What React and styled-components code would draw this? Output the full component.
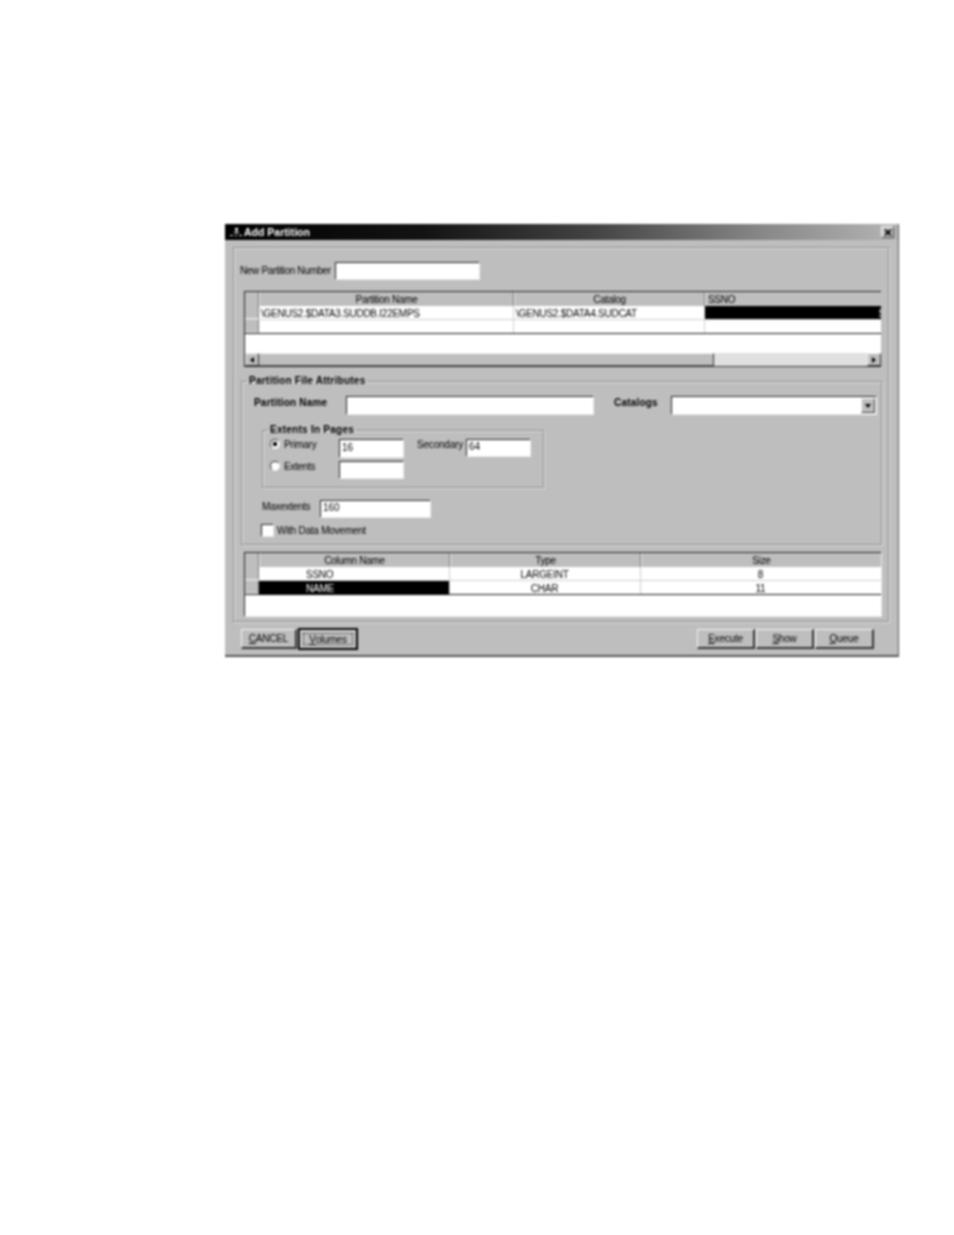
import React from "react";
import styled, { createGlobalStyle } from "styled-components";

const partitionColumns = "14px 255px 191px 177px";
const columnColumns = "14px 191px 191px 241px";

const App = () => {
  return (
    <>
      <GlobalStyle />
      <Page>
        <Window>
          <TitleBar>
            <AppIcon viewBox="0 0 14 10">
              <path d="M6 1h3v2H8v2h2v1H5V5h2V3H6z" fill="#fff" />
              <path d="M1 8h3v1H1zM6 8h2v1H6zM10 8h3v1h-3z" fill="#eee" />
            </AppIcon>
            <TitleText>Add Partition</TitleText>
            <CloseButton>
              <svg width="8" height="7" viewBox="0 0 8 7">
                <path d="M1 0.5l6 6M7 0.5l-6 6" stroke="#000" strokeWidth="1.8" />
              </svg>
            </CloseButton>
          </TitleBar>

          <Panel>
            <NumberRow>
              <NumberLabel>New Partition Number</NumberLabel>
              <Field $width={144} readOnly />
            </NumberRow>

            <DataGrid $height={76}>
              <GridRow $columns={partitionColumns} $header>
                <RowHandle />
                <HeaderCell>Partition Name</HeaderCell>
                <HeaderCell>Catalog</HeaderCell>
                <HeaderCell $left>SSNO</HeaderCell>
              </GridRow>
              <GridRow $columns={partitionColumns}>
                <RowHandle />
                <Cell $align="left">\GENUS2.$DATA3.SUDDB.I22EMPS</Cell>
                <Cell $align="left">\GENUS2.$DATA4.SUDCAT</Cell>
                <Cell $selected $align="right">
                  <ClippedGlyph>S</ClippedGlyph>
                </Cell>
              </GridRow>
              <GridRow $columns={partitionColumns} $last>
                <RowHandle />
                <Cell />
                <Cell />
                <Cell />
              </GridRow>
              <GridBlank />
              <ScrollBar>
                <ScrollButton>
                  <ArrowLeft />
                </ScrollButton>
                <ScrollThumb />
                <ScrollTrack />
                <ScrollButton>
                  <ArrowRight />
                </ScrollButton>
              </ScrollBar>
            </DataGrid>

            <AttributesGroup>
              <GroupTitle $inset={-7}>Partition File Attributes</GroupTitle>
              <NameRow>
                <NameLabel $width={92}>Partition Name</NameLabel>
                <Field $width={247} $height={18} readOnly />
                <NameLabel $width={57} $gap={21}>
                  Catalogs
                </NameLabel>
                <SelectBox>
                  <SelectButton>
                    <ArrowDown />
                  </SelectButton>
                </SelectBox>
              </NameRow>

              <ExtentsGroup>
                <GroupTitle $inset={-2}>Extents In Pages</GroupTitle>
                <ExtentsGrid>
                  <RadioLabel>
                    <Radio $checked />
                    Primary
                  </RadioLabel>
                  <Field $width={64} $height={18} value="16" readOnly />
                  <SecondaryLabel>Secondary</SecondaryLabel>
                  <Field $width={64} $height={17} value="64" readOnly />
                  <RadioLabel>
                    <Radio />
                    Extents
                  </RadioLabel>
                  <Field $width={64} $height={17} readOnly />
                </ExtentsGrid>
              </ExtentsGroup>

              <MaxRow>
                <MaxLabel>Maxextents</MaxLabel>
                <Field $width={110} value="160" readOnly />
              </MaxRow>
              <CheckRow>
                <CheckBox />
                <PlainLabel>With Data Movement</PlainLabel>
              </CheckRow>
            </AttributesGroup>

            <ColumnsGrid $height={64}>
              <GridRow $columns={columnColumns} $header>
                <RowHandle />
                <HeaderCell>Column Name</HeaderCell>
                <HeaderCell>Type</HeaderCell>
                <HeaderCell>Size</HeaderCell>
              </GridRow>
              <GridRow $columns={columnColumns}>
                <RowHandle />
                <Cell $indent={47}>SSNO</Cell>
                <Cell>LARGEINT</Cell>
                <Cell>8</Cell>
              </GridRow>
              <GridRow $columns={columnColumns} $last>
                <RowHandle />
                <Cell $selected $indent={47}>
                  NAME
                </Cell>
                <Cell>CHAR</Cell>
                <Cell>11</Cell>
              </GridRow>
              <GridBlank />
            </ColumnsGrid>
          </Panel>

          <ButtonBar>
            <ButtonGroup>
              <DialogButton $width={56}>
                <u>C</u>ANCEL
              </DialogButton>
              <DefaultButton>
                <FocusFrame>
                  <u>V</u>olumes
                </FocusFrame>
              </DefaultButton>
            </ButtonGroup>
            <ButtonGroup>
              <DialogButton $width={58}>
                <u>E</u>xecute
              </DialogButton>
              <DialogButton $width={58}>
                <u>S</u>how
              </DialogButton>
              <DialogButton $width={59}>
                <u>Q</u>ueue
              </DialogButton>
            </ButtonGroup>
          </ButtonBar>
        </Window>
      </Page>
    </>
  );
};

export default App;

const GlobalStyle = createGlobalStyle`
  html, body {
    margin: 0;
    padding: 0;
    background: #fff;
  }

  * {
    box-sizing: border-box;
  }
`;

const Page = styled.div`
  height: 1235px;
  padding: 224px 0 0 225px;
  background: #fff;
  font-family: "Liberation Sans", Arial, sans-serif;
  font-size: 10px;
  color: #000;
`;

const Window = styled.div`
  width: 674px;
  height: 433px;
  display: flex;
  flex-direction: column;
  background: #bebebe;
  border-right: 1px solid #555;
  border-bottom: 2px solid #555;
  filter: blur(0.8px);
`;

const TitleBar = styled.div`
  height: 16px;
  flex: none;
  display: flex;
  align-items: center;
  padding: 0 4px 0 4px;
  background: linear-gradient(90deg, #000 0%, #141414 30%, #444 55%, #888 80%, #b4b4b4 100%);
`;

const AppIcon = styled.svg`
  width: 14px;
  height: 10px;
  margin-right: 1px;
`;

const TitleText = styled.span`
  flex: 1;
  font-size: 10.5px;
  font-weight: 700;
  color: #fff;
`;

const CloseButton = styled.div`
  width: 13px;
  height: 12px;
  display: flex;
  align-items: center;
  justify-content: center;
  background: #c8c8c8;
  border-right: 1px solid #444;
  border-bottom: 1px solid #444;
  border-top: 1px solid #f4f4f4;
  border-left: 1px solid #f4f4f4;
`;

const Panel = styled.div`
  width: 656px;
  height: 375px;
  flex: none;
  margin: 7px 0 0 8px;
  padding: 14px 0 0 6px;
  border: 1px solid #8c8c8c;
  box-shadow: inset 1px 1px #e2e2e2, 1px 1px #e2e2e2;
`;

const NumberRow = styled.div`
  display: flex;
  align-items: center;
  height: 17px;
`;

const PlainLabel = styled.span`
  letter-spacing: -0.25px;
  white-space: nowrap;
`;

const NumberLabel = styled(PlainLabel)`
  width: 95px;
  flex: none;
  letter-spacing: -0.35px;
`;

const Field = styled.input`
  flex: none;
  width: ${({ $width }) => $width}px;
  height: ${({ $height }) => $height || 17}px;
  padding: 0 0 3px 2px;
  border: 0;
  border-top: 1px solid #222;
  border-left: 1px solid #222;
  border-radius: 0;
  outline: none;
  background: #fff;
  box-shadow: 1px 1px #ececec;
  font-family: "Liberation Sans", Arial, sans-serif;
  font-size: 10px;
  color: #000;
`;

const DataGrid = styled.div`
  width: 637px;
  height: ${({ $height }) => $height}px;
  margin: 12px 0 0 4px;
  display: flex;
  flex-direction: column;
  background: #fff;
  border-top: 1px solid #222;
  border-left: 1px solid #222;
  overflow: hidden;
`;

const ColumnsGrid = styled(DataGrid)`
  margin-top: 7px;
  box-shadow: 1px 1px #ececec;
`;

const GridRow = styled.div`
  display: grid;
  grid-template-columns: ${({ $columns }) => $columns};
  flex: none;
  height: 14px;
  background: ${({ $header }) => ($header ? "#bebebe" : "#fff")};
  border-bottom: ${({ $last, $header }) =>
    $last ? "1px solid #111" : $header ? "0" : "1px solid #cfcfcf"};
`;

const RowHandle = styled.div`
  background: #bebebe;
  border-right: 1px solid #777;
  border-bottom: 1px solid #ececec;
`;

const HeaderCell = styled.div`
  padding: 0 2px;
  line-height: 15px;
  text-align: ${({ $left }) => ($left ? "left" : "center")};
  letter-spacing: -0.3px;
  border-right: 1px solid #777;
  border-left: 1px solid #ececec;
  box-shadow: inset 0 -1px #333;
`;

const Cell = styled.div`
  padding: 0 3px 0 ${({ $indent }) => $indent || 2}px;
  overflow: hidden;
  line-height: 15px;
  white-space: nowrap;
  letter-spacing: -0.25px;
  text-align: ${({ $align, $indent }) => ($indent ? "left" : $align || "center")};
  background: ${({ $selected }) => ($selected ? "#000" : "#fff")};
  color: ${({ $selected }) => ($selected ? "#fff" : "#000")};
  border-right: 1px solid #cfcfcf;
`;

const ClippedGlyph = styled.span`
  display: inline-block;
  margin-right: -7px;
`;

const GridBlank = styled.div`
  flex: 1;
  background: #fff;
`;

const ScrollBar = styled.div`
  flex: none;
  height: 14px;
  display: flex;
  background: #bebebe;
  border-bottom: 1px solid #333;
`;

const ScrollButton = styled.div`
  flex: none;
  width: 14px;
  display: flex;
  align-items: center;
  justify-content: center;
  background: #bebebe;
  border-top: 1px solid #f0f0f0;
  border-left: 1px solid #f0f0f0;
  border-right: 1px solid #333;
  border-bottom: 1px solid #333;
`;

const ScrollThumb = styled.div`
  width: 455px;
  flex: none;
  background: #bebebe;
  border-top: 1px solid #f0f0f0;
  border-right: 1px solid #333;
  border-bottom: 1px solid #555;
`;

const ScrollTrack = styled.div`
  flex: 1;
  background: #e0e0e0;
`;

const ArrowLeft = styled.span`
  border-top: 3px solid transparent;
  border-bottom: 3px solid transparent;
  border-right: 4px solid #000;
`;

const ArrowRight = styled.span`
  border-top: 3px solid transparent;
  border-bottom: 3px solid transparent;
  border-left: 4px solid #000;
`;

const ArrowDown = styled.span`
  border-left: 3px solid transparent;
  border-right: 3px solid transparent;
  border-top: 4px solid #000;
`;

const AttributesGroup = styled.fieldset`
  width: 641px;
  height: 171px;
  margin: 7px 0 0 1px;
  padding: 0 0 0 12px;
  border: 1px solid #8c8c8c;
  box-shadow: inset 1px 1px #e2e2e2, 1px 1px #e2e2e2;
`;

const GroupTitle = styled.legend`
  margin-left: ${({ $inset }) => $inset}px;
  padding: 0 2px;
  font-weight: 700;
  line-height: 14px;
  letter-spacing: 0.25px;
  white-space: nowrap;
`;

const NameRow = styled.div`
  display: flex;
  align-items: flex-start;
  margin-top: 8px;
`;

const NameLabel = styled.span`
  flex: none;
  width: ${({ $width }) => $width}px;
  margin-left: ${({ $gap }) => $gap || 0}px;
  font-weight: 700;
  line-height: 14px;
  letter-spacing: 0.2px;
  white-space: nowrap;
`;

const SelectBox = styled.div`
  flex: none;
  width: 205px;
  height: 18px;
  display: flex;
  justify-content: flex-end;
  align-items: center;
  padding-right: 1px;
  background: #fff;
  border-top: 1px solid #222;
  border-left: 1px solid #222;
  box-shadow: 1px 1px #ececec;
`;

const SelectButton = styled(ScrollButton)`
  width: 14px;
  height: 15px;
`;

const ExtentsGroup = styled.fieldset`
  width: 282px;
  height: 65px;
  margin: 9px 0 0 8px;
  padding: 0 0 0 7px;
  border: 1px solid #8c8c8c;
  box-shadow: inset 1px 1px #e2e2e2, 1px 1px #e2e2e2;
`;

const ExtentsGrid = styled.div`
  display: grid;
  grid-template-columns: 69px 78px 49px 64px;
  row-gap: 4px;
  margin-top: 2px;
`;

const RadioLabel = styled.label`
  display: flex;
  align-items: flex-start;
  gap: 4px;
  line-height: 12px;
  letter-spacing: -0.3px;
`;

const Radio = styled.span`
  flex: none;
  width: 10px;
  height: 10px;
  border-radius: 50%;
  background: ${({ $checked }) =>
    $checked ? "radial-gradient(circle, #000 0 2px, #fff 2.5px)" : "#fff"};
  border: 1px solid #333;
  border-right-color: #eee;
  border-bottom-color: #eee;
`;

const SecondaryLabel = styled.span`
  line-height: 12px;
  letter-spacing: -0.2px;
  white-space: nowrap;
`;

const MaxRow = styled.div`
  display: flex;
  align-items: flex-start;
  margin: 12px 0 0 8px;
`;

const MaxLabel = styled.span`
  width: 58px;
  flex: none;
  line-height: 14px;
  letter-spacing: -0.3px;
`;

const CheckRow = styled.div`
  display: flex;
  align-items: center;
  gap: 4px;
  margin: 7px 0 0 7px;
`;

const CheckBox = styled.span`
  flex: none;
  width: 12px;
  height: 12px;
  background: #fff;
  border-top: 1px solid #222;
  border-left: 1px solid #222;
  box-shadow: 1px 1px #ececec;
`;

const ButtonBar = styled.div`
  display: flex;
  justify-content: space-between;
  align-items: center;
  padding: 6px 24px 0 16px;
`;

const ButtonGroup = styled.div`
  display: flex;
  align-items: center;
  gap: 1px;
`;

const DialogButton = styled.div`
  width: ${({ $width }) => $width}px;
  height: 20px;
  display: flex;
  align-items: center;
  justify-content: center;
  background: #bebebe;
  border-top: 1px solid #f4f4f4;
  border-left: 1px solid #f4f4f4;
  border-right: 2px solid #333;
  border-bottom: 2px solid #333;
  letter-spacing: -0.2px;
`;

const DefaultButton = styled.div`
  width: 60px;
  height: 22px;
  padding: 3px;
  border: 2px solid #000;
  box-shadow: inset 1px 1px #f0f0f0;
`;

const FocusFrame = styled.div`
  height: 100%;
  display: flex;
  align-items: center;
  justify-content: center;
  border: 1px dotted #333;
  letter-spacing: -0.2px;
`;
